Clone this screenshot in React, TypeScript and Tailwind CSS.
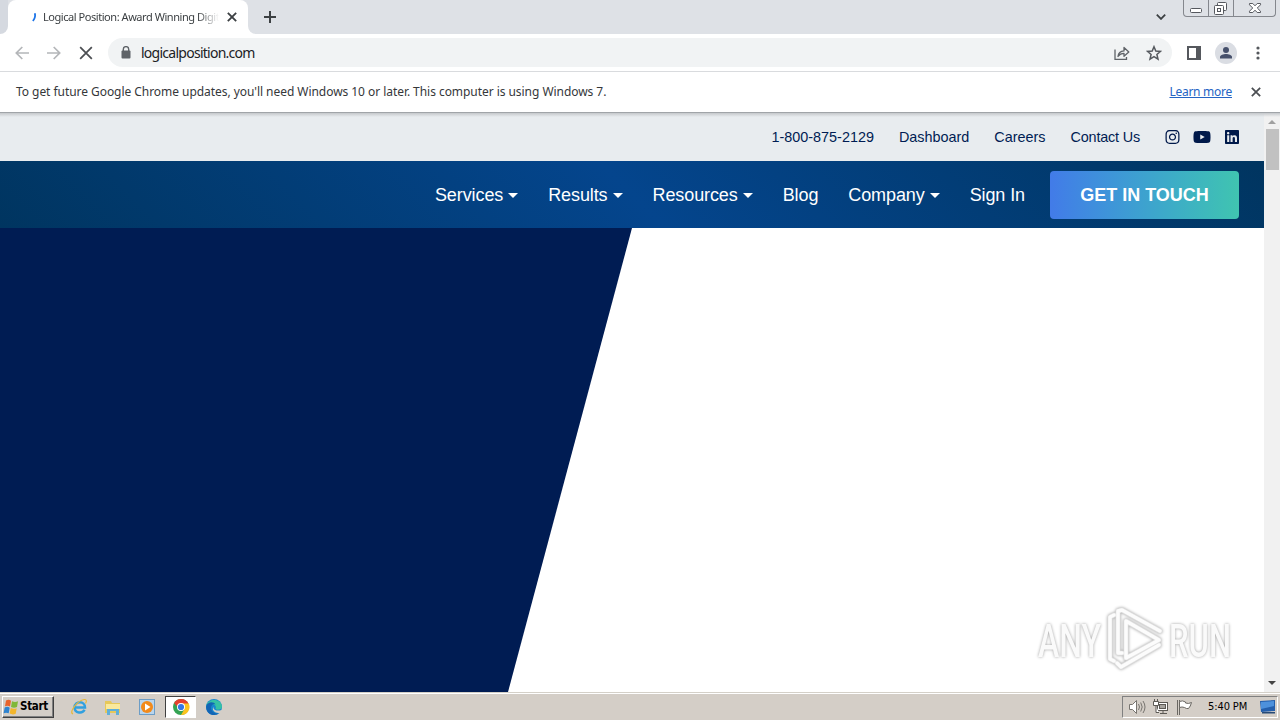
import type { ReactNode } from "react"
import { FaInstagram, FaLinkedin, FaYoutube } from "react-icons/fa"

interface NavItem {
  label: string
  dropdown?: boolean
}

const topLinks = ["1-800-875-2129", "Dashboard", "Careers"]

const navItems: NavItem[] = [
  { label: "Services", dropdown: true },
  { label: "Results", dropdown: true },
  { label: "Resources", dropdown: true },
  { label: "Blog" },
  { label: "Company", dropdown: true },
  { label: "Sign In" },
]

function Cross({ size, weight = 1.8, className }: { size: number; weight?: number; className?: string }) {
  return (
    <svg width={size} height={size} viewBox="0 0 12 12" className={className} stroke="currentColor" strokeWidth={weight}>
      <path d="M1 1l10 10M11 1L1 11" />
    </svg>
  )
}

function TabStrip() {
  return (
    <div className="flex h-[34px] bg-[#dee1e6]">
      <div className="w-2 bg-white">
        <div className="h-full rounded-br-lg bg-[#d5d9e0]" />
      </div>
      <div className="flex h-full w-[240px] items-center rounded-t-lg bg-white pl-[21px]">
        <svg width="10" height="10" viewBox="0 0 10 10" className="shrink-0" fill="none" stroke="#1a73e8" strokeWidth="1.8">
          <path d="M5.8 1.2Q7 5 3.9 9" />
        </svg>
        <span className="ml-1 w-[176px] overflow-hidden text-[11px] leading-4 tracking-[-0.45px] whitespace-nowrap text-[#3c4043] [mask-image:linear-gradient(to_right,black_88%,transparent)]">
          Logical Position: Award Winning Digital
        </span>
        <Cross size={10} weight={2.2} className="ml-2 shrink-0 text-[#3c4043]" />
      </div>
      <div className="w-2 bg-white">
        <div className="h-full rounded-bl-lg bg-[#dee1e6]" />
      </div>
      <svg width="12" height="12" viewBox="0 0 12 12" className="mt-[11px] ml-2" stroke="#3c4043" strokeWidth="2">
        <path d="M6 0v12M0 6h12" />
      </svg>
      <svg width="10" height="6" viewBox="0 0 10 6" className="mt-[14px] ml-auto" fill="none" stroke="#3c4043" strokeWidth="1.8">
        <path d="M.8.7L5 4.9 9.2.7" />
      </svg>
      <div className="mr-1 ml-[17px] flex h-[17px] rounded-b-[4px] border border-t-0 border-[#84878d] text-[#55585e]">
        <div className="w-[25px] border-r border-[#84878d]">
          <svg width="24" height="16" fill="#fff" stroke="currentColor">
            <rect x="6.5" y="8.5" width="11" height="4" rx="1" />
          </svg>
        </div>
        <div className="w-[25px] border-r border-[#84878d]">
          <svg width="24" height="16" fill="#fff" stroke="currentColor">
            <rect x="8.5" y="2.5" width="9" height="8" rx="1" />
            <rect x="5.5" y="5.5" width="9" height="9" rx="1" />
            <rect x="8.5" y="8.5" width="3" height="3" />
          </svg>
        </div>
        <svg width="41" height="16" fill="#fff" stroke="currentColor">
          <path d="M15.5 3.5h3.3l2.2 2.3 2.2-2.3h3.3v1.3L23.3 8l3.2 3.2v1.3h-3.3L21 10.2l-2.2 2.3h-3.3v-1.3L18.7 8l-3.2-3.2z" />
        </svg>
      </div>
    </div>
  )
}

function Toolbar() {
  return (
    <div className="flex h-[38px] items-center border-b border-[#d9dbde] bg-white pl-[15px]">
      <svg width="14" height="14" viewBox="0 0 14 14" fill="none" stroke="#b4b6b9" strokeWidth="1.7">
        <path d="M14 7H1.5M7.3 1L1.3 7l6 6" />
      </svg>
      <svg width="14" height="14" viewBox="0 0 14 14" className="ml-[18px]" fill="none" stroke="#b4b6b9" strokeWidth="1.7">
        <path d="M0 7h12.5M6.7 1l6 6-6 6" />
      </svg>
      <Cross size={14} weight={1.5} className="ml-[18px] text-[#4b4e52]" />
      <div className="ml-[15px] flex h-[29px] w-[1064px] items-center rounded-full bg-[#f1f3f4] pl-[13px]">
        <svg width="10" height="13" viewBox="0 0 10 13" className="-mt-px">
          <path d="M2.3 5V3.3a2.7 2.7 0 015.4 0V5" fill="none" stroke="#5f6368" strokeWidth="1.4" />
          <rect x=".5" y="4.5" width="9" height="8" rx="1" fill="#5f6368" />
        </svg>
        <span className="ml-[10px] text-[14px] tracking-[-0.74px] text-[#202124]">logicalposition.com</span>
        <svg width="16" height="14" viewBox="0 0 16 14" className="ml-auto" fill="none" stroke="#5f6368" strokeWidth="1.3">
          <path d="M1 3.5v9.8h11.5V11" />
          <path d="M4 10.5c.4-3.7 2.7-5.4 6-5.6V1.5L14.8 6 10 10.2V7.4C7.4 7.4 5.5 8.3 4 10.5z" strokeLinejoin="round" />
        </svg>
        <svg width="16" height="16" viewBox="0 0 16 16" className="mr-[10px] ml-4" fill="none" stroke="#55595e" strokeWidth="1.5">
          <path d="M8 1.7l1.8 4.3 4.7.4-3.6 3.1 1.1 4.6L8 11.7l-4 2.4 1.1-4.6L1.5 6.400l4.700-.4z" />
        </svg>
      </div>
      <svg width="14" height="14" viewBox="0 0 14 14" className="ml-[15px]">
        <rect x="1" y="1" width="12" height="12" fill="none" stroke="#55585d" strokeWidth="2" />
        <rect x="9" y="1" width="4" height="12" fill="#55585d" />
      </svg>
      <svg width="22" height="22" viewBox="0 0 22 22" className="ml-[14px]">
        <circle cx="11" cy="11" r="11" fill="#dadde3" />
        <circle cx="11" cy="8" r="3" fill="#46506b" />
        <path d="M5 16.5V15c0-2 3.500-3 6-3s6 1 6 3v1.500z" fill="#46506b" />
      </svg>
      <svg width="4" height="14" viewBox="0 0 4 14" className="ml-[19px]" fill="#55585d">
        <circle cx="2" cy="2" r="1.6" />
        <circle cx="2" cy="7" r="1.6" />
        <circle cx="2" cy="12" r="1.6" />
      </svg>
    </div>
  )
}

function InfoBar() {
  return (
    <div className="flex h-10 items-center bg-white pr-[19px] pl-4 text-[12px] text-[#35373a]">
      <span className="tracking-[-0.05px] whitespace-nowrap">
        To get future Google Chrome updates, you'll need Windows 10 or later. This computer is using Windows 7.
      </span>
      <span className="ml-auto tracking-[-0.27px] text-[#2564c4] underline">Learn more</span>
      <Cross size={10} weight={2.1} className="ml-[19px] text-[#4b4e52]" />
    </div>
  )
}

function SiteHeader() {
  return (
    <>
      <div className="flex h-12 items-center justify-end gap-[25px] bg-[#e8ecef] pr-[25px] text-[14.4px] text-[#001c53]">
        {topLinks.map((link) => (
          <span key={link} className="pt-[2px]">
            {link}
          </span>
        ))}
        <span className="pt-[2px] tracking-[-0.17px]">Contact Us</span>
        <div className="flex items-center text-[#00194a]">
          <FaInstagram className="h-4 w-[15px]" />
          <FaYoutube className="ml-[13px] h-[18px] w-[18px]" />
          <FaLinkedin className="ml-[14px] h-4 w-[14px]" />
        </div>
      </div>
      <nav className="flex h-[67px] items-center justify-end gap-[30px] bg-[linear-gradient(45deg,#003560_0%,#04458d_50%,#003560_100%)] pr-[25px] text-[18px] text-white">
        {navItems.map((item) => (
          <span key={item.label} className="flex items-center pt-[2px] tracking-[-0.1px]">
            {item.label}
            {item.dropdown && (
              <span className="ml-[5px] border-x-[5px] border-t-[5px] border-x-transparent border-t-white" />
            )}
          </span>
        ))}
        <button className="-ml-[5px] h-12 w-[189px] rounded-[4px] bg-linear-to-r from-[#427be8] to-[#40c4b0] pt-px text-[18px] font-bold">
          GET IN TOUCH
        </button>
      </nav>
    </>
  )
}

function Watermark() {
  return (
    <svg
      width="200"
      height="66"
      viewBox="0 0 200 66"
      className="absolute right-[29px] bottom-[19px] overflow-visible drop-shadow-[0_0_1.5px_#a0a0a0]"
      fill="#fafafa"
    >
      <g fontFamily="Roboto" fontSize="46" fontWeight="500">
        <text x="3" y="50" textLength="63" lengthAdjust="spacingAndGlyphs">ANY</text>
        <text x="134" y="50" textLength="62" lengthAdjust="spacingAndGlyphs">RUN</text>
      </g>
      <g fill="none" strokeLinejoin="round" strokeLinecap="round">
        <path
          d="M79 8l-4 2v42l4 2M87 46h-4V4l4-1 38 21M91 14v37l33-18zM82 56l4 4 38-22"
          stroke="#e0e0e0"
          strokeWidth="5"
        />
        <path
          d="M79 8l-4 2v42l4 2M87 46h-4V4l4-1 38 21M91 14v37l33-18zM82 56l4 4 38-22"
          stroke="#fcfcfc"
          strokeWidth="3.5"
        />
      </g>
    </svg>
  )
}

function Scrollbar() {
  return (
    <div className="flex w-4 flex-col items-center bg-[#f1f1f1] pt-px">
      <svg width="16" height="16" fill="#a0a0a0">
        <path d="M4 11h8L8 7z" />
      </svg>
      <div className="h-[41px] w-[13px] bg-[#c1c1c1]" />
      <svg width="16" height="16" className="mt-auto" fill="#444">
        <path d="M4 5h8L8 9z" />
      </svg>
    </div>
  )
}

function TaskIcon({ children }: { children: ReactNode }) {
  return (
    <svg width="18" height="18" viewBox="0 0 18 18">
      {children}
    </svg>
  )
}

function Taskbar() {
  return (
    <div className="flex h-7 items-center border-t border-[#d4d0c8] bg-[#d4cec7] pt-px pl-[2px] text-[11px] text-black shadow-[inset_0_1px_0_#fff]">
      <div className="flex h-[22px] w-[52px] items-center border border-t-white border-r-[#404040] border-b-[#404040] border-l-white shadow-[inset_-1px_-1px_0_#808080]">
        <svg width="16" height="16" viewBox="0 0 16 16" className="shrink-0">
          <path d="M3 1.500Q6 0 8 1.800L7 7.500Q4.500 6 2 7.300z" fill="#e8632b" />
          <path d="M9 2.200q3 1.600 6 0L14 8q-3 1.300-6 0z" fill="#80b83a" />
          <path d="M1.700 8.500q2.800-1.400 5 .2l-1 5.600Q3 13 .6 14.300z" fill="#2f83cf" />
          <path d="M7.700 9q3 1.400 6 .2l-1 5.600q-3 1.300-6-.2z" fill="#f3b62c" />
        </svg>
        <span className="ml-px font-['DejaVu_Sans_Condensed','DejaVu_Sans',sans-serif] text-[11.5px] font-bold tracking-[-0.3px]">
          Start
        </span>
      </div>
      <div className="ml-4 flex items-center gap-[16px]">
        <TaskIcon>
          <path d="M4 9.500h11c0-7-10-7-10.500 0 .3 6 8 6.500 10 2.300" fill="none" stroke="#31a0df" strokeWidth="2.500" />
          <path d="M3 16C-2 14 9 1 15 1.500c2 .4 1.500 2.500.5 4" fill="none" stroke="#e8b83a" strokeWidth="1.200" />
        </TaskIcon>
        <TaskIcon>
          <path d="M1 3h6l1 2h8v10H1z" fill="#e6c85a" />
          <path d="M2 6h14v5H2z" fill="#fae99c" />
          <path d="M3 17v-6h12v6h-3v-4H6v4z" fill="#60afd8" />
        </TaskIcon>
        <TaskIcon>
          <rect x="1.5" y="1.5" width="15" height="15" fill="#b9d5ed" stroke="#6c9dc6" />
          <circle cx="9" cy="9" r="6" fill="#f28a1b" />
          <path d="M7 5.500l5.500 3.500L7 12.500z" fill="#fff" />
        </TaskIcon>
        <div className="-mx-[7px] flex h-[22px] w-[31px] items-center justify-center border border-t-[#404040] border-r-white border-b-white border-l-[#404040] bg-white">
          <TaskIcon>
            <circle cx="9" cy="9" r="8" fill="#34a353" />
            <path d="M9 5h7.400A8 8 0 019 17l3.500-6z" fill="#fcc31e" />
            <path d="M9 1a8 8 0 017.400 4.500H9A3.600 3.600 0 005.500 9L2.100 5A8 8 0 019 1z" fill="#e6402f" />
            <circle cx="9" cy="9" r="4" fill="#fff" />
            <circle cx="9" cy="9" r="3.1" fill="#3577e5" />
          </TaskIcon>
        </div>
        <TaskIcon>
          <circle cx="9" cy="9" r="8" fill="#1787ce" />
          <path d="M1.200 8C3 0 16 0 17 8.500c0 3.500-5 4-6.500 2.500 1-2 .2-4.500-3-4.500C4 6.500 2 7.500 1.200 8z" fill="#35c1a5" />
          <path d="M1.200 8C3 3 9 3.500 10.500 6.500 7 5.500 5 9 6.500 12s5 4.500 8 3C10 19 .5 17 1.200 8z" fill="#1265b5" />
          <path d="M8.500 8.500c-1 3 3 5 8 3.500l2 3h-3C11 15.500 6 13 8.500 8.500z" fill="#d4cec7" />
        </TaskIcon>
      </div>
      <div className="mr-[2px] ml-auto flex h-[22px] w-[156px] items-center border border-t-[#808080] border-r-white border-b-white border-l-[#808080] pl-[5px]">
        <svg width="18" height="16" viewBox="0 0 18 16" fill="#fff" stroke="#77746f">
          <path d="M1.500 5.500h3l4-4v13l-4-4h-3z" />
          <path d="M10.500 5q2 3 0 6M12.700 3.500q3 4.500 0 9M15 2q4 6 0 12" fill="none" />
        </svg>
        <svg width="17" height="16" viewBox="0 0 17 16" className="ml-[6px]" fill="#fff" stroke="#5c5954">
          <rect x="5.5" y="3.5" width="10" height="8" />
          <rect x="7.5" y="5.5" width="6" height="4" fill="#a7a49f" />
          <path d="M1.500 2.500h5v4h-5zM2.500 0v2M5.500 0v2M4 7v6.500h3M8 14.500h7M11 12v2" />
        </svg>
        <svg width="17" height="16" viewBox="0 0 17 16" className="ml-[7px]" fill="#fff" stroke="#6a6762">
          <path d="M1.500 1v15M3.500 1v15" />
          <path d="M3.500 2.500q3-1.500 6 .5v1q3 1.200 6-.5-1 4-3 6-2 .5-4-1-2.500-1-5 0z" />
        </svg>
        <span className="ml-[15px] font-['DejaVu_Sans_Condensed','DejaVu_Sans',sans-serif] text-[11px] tracking-[-0.1px] whitespace-nowrap">
          5:40 PM
        </span>
        <svg width="16" height="14" viewBox="0 0 16 14" className="mr-px ml-auto">
          <path d="M0 1l15-1v11L1 12z" fill="#245fac" />
          <path d="M1 2l13-1v5L1 9z" fill="#4d91dc" />
          <path d="M2 12h13v1.500H2z" fill="#274a76" />
        </svg>
      </div>
    </div>
  )
}

export default function App() {
  return (
    <div className="flex h-[720px] w-[1280px] flex-col overflow-hidden bg-white font-['Noto_Sans',sans-serif]">
      <TabStrip />
      <Toolbar />
      <InfoBar />
      <div className="relative flex h-[580px]">
        <main className="flex w-[1264px] flex-col pt-px font-['Liberation_Sans',sans-serif]">
          <SiteHeader />
          <section className="relative grow bg-white">
            <div className="h-full w-[632px] bg-[#001c53] [clip-path:polygon(0_0,632px_0,508px_100%,0_100%)]" />
            <Watermark />
          </section>
        </main>
        <Scrollbar />
        {/* Shadow cast by the browser chrome over the page */}
        <div className="absolute inset-x-0 top-0 h-[5px] border-t border-[#a0a4a8] bg-linear-to-b from-[#c5c8cb] to-transparent" />
      </div>
      <Taskbar />
    </div>
  )
}
